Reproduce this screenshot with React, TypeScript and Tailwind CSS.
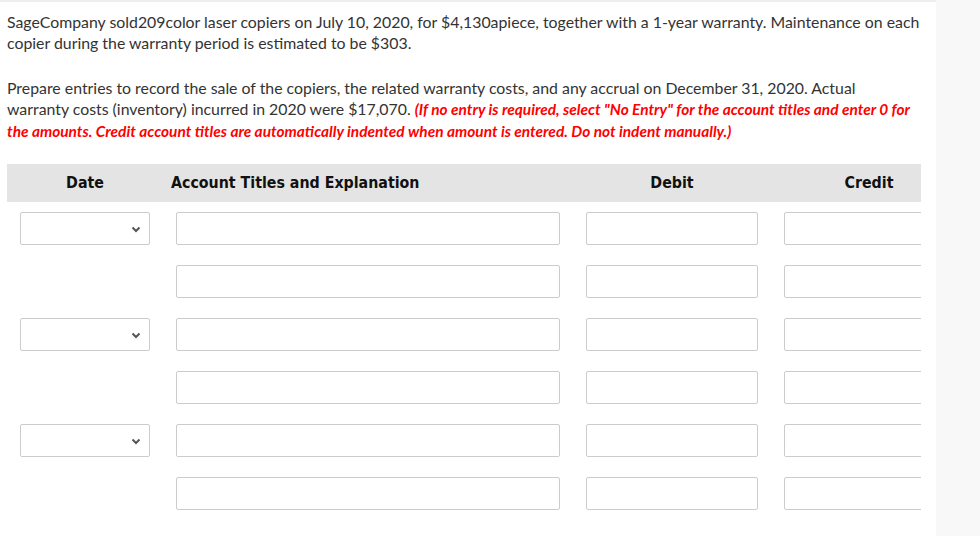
const rows = [true, false, true, false, true, false]

function Chevron() {
  return (
    <svg width="10" height="7" viewBox="0 0 10 7" className="absolute right-[8px] top-[13px]">
      <path d="M1.5 1.5 L5 5 L8.5 1.5" fill="none" stroke="#555" strokeWidth="2" />
    </svg>
  )
}

function Box({ className }: { className: string }) {
  return <div className={`h-[33px] rounded-[2px] border border-[#cccccc] bg-white ${className}`} />
}

export default function App() {
  return (
    <div className="flex min-h-[536px] bg-[#f8f8f8]" style={{ fontFamily: "Lato, 'Open Sans', sans-serif" }}>
      <div className="w-[936px] shrink-0 border-t-2 border-[#eeeeee] bg-white">
        <div className="whitespace-nowrap pl-[7px] pt-[9px] text-[15.85px] leading-[21px] text-[#333333]">
          <p>
            SageCompany sold209color laser copiers on July 10, 2020, for $4,130apiece, together with a 1-year warranty.
            Maintenance on each
            <br />
            copier during the warranty period is estimated to be $303.
          </p>
          <p className="mt-[24px]">
            Prepare entries to record the sale of the copiers, the related warranty costs, and any accrual on December 31,
            2020. Actual
            <br />
            warranty costs (inventory) incurred in 2020 were $17,070.{" "}
            <span className="text-[15.45px] font-bold italic text-[#ff0000]">
              (If no entry is required, select "No Entry" for the account titles and enter 0 for
              <br />
              the amounts. Credit account titles are automatically indented when amount is entered. Do not indent manually.)
            </span>
          </p>
        </div>

        <div className="ml-[7px] mt-[22px] w-[914px] overflow-hidden">
          <div className="w-[960px]">
            <div
              className="flex h-[38px] items-center bg-[#e4e4e4] text-[15.8px] font-bold text-[#111111]"
              style={{ fontFamily: "'DejaVu Sans Condensed', 'DejaVu Sans', sans-serif" }}
            >
              <div className="w-[156px] text-center">Date</div>
              <div className="w-[410px] pl-[8px]">Account Titles and Explanation</div>
              <div className="w-[198px] text-center">Debit</div>
              <div className="w-[196px] text-center">Credit</div>
            </div>
            <div className="flex flex-col gap-[20px] pt-[10px]">
              {rows.map((hasDate, i) => (
                <div key={i} className="flex">
                  <div className="w-[156px] px-[13px]">
                    {hasDate && (
                      <div className="relative h-[33px] rounded-[2px] border border-[#cccccc] bg-white">
                        <Chevron />
                      </div>
                    )}
                  </div>
                  <div className="w-[410px] px-[13px]">
                    <Box className="w-full" />
                  </div>
                  <div className="w-[198px] px-[13px]">
                    <Box className="w-full" />
                  </div>
                  <div className="w-[196px] px-[13px]">
                    <Box className="w-full" />
                  </div>
                </div>
              ))}
            </div>
          </div>
        </div>
      </div>
      <div className="flex-1" />
    </div>
  )
}
